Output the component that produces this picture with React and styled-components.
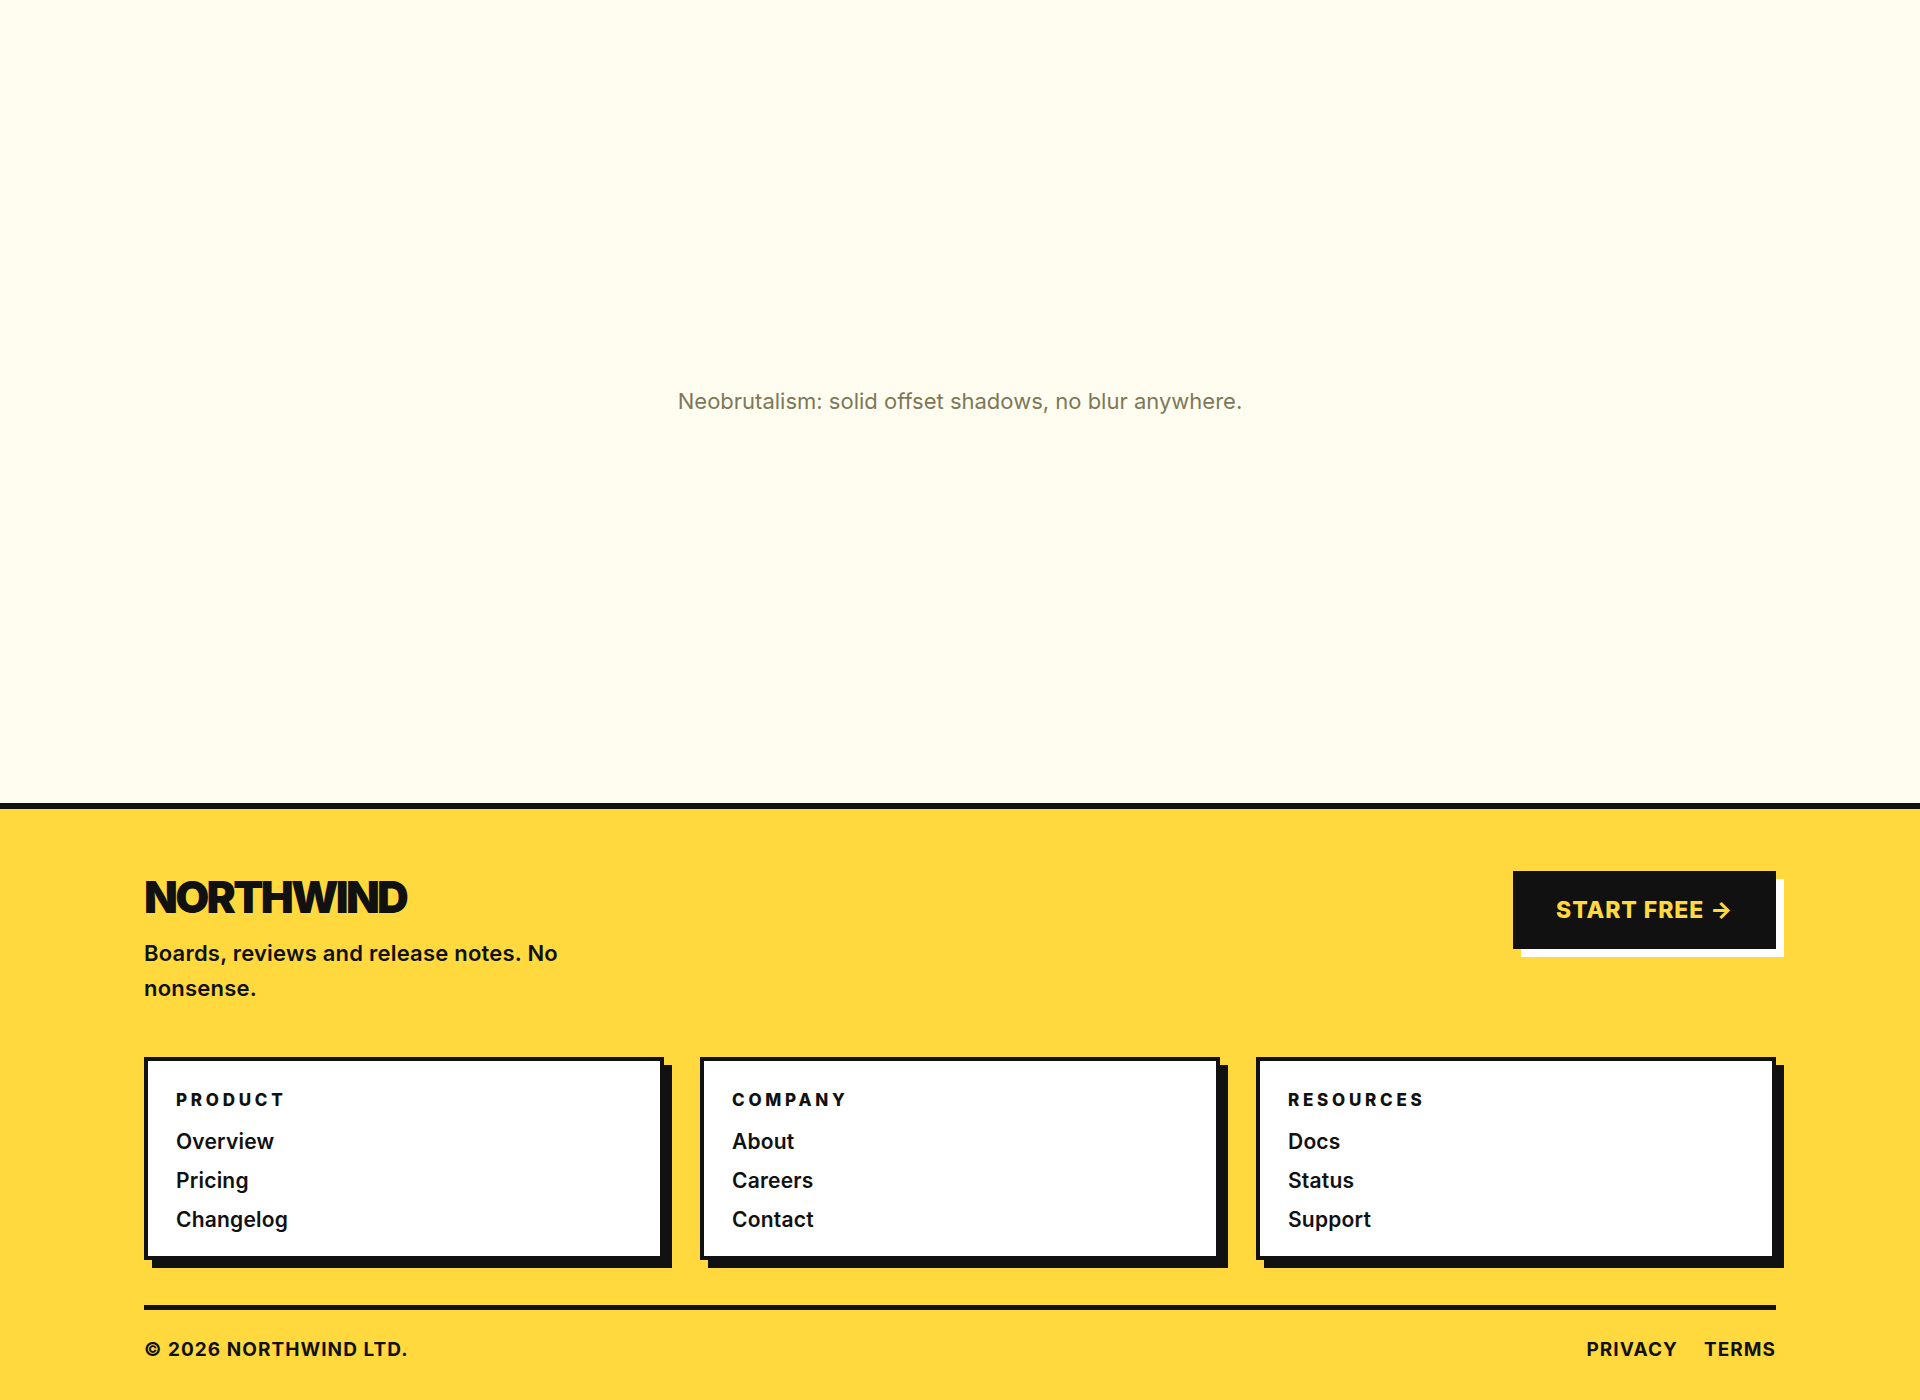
import React from "react";
import styled, { createGlobalStyle } from "styled-components";

const ink = "#111111";
const sun = "#FFD93D";
const cream = "#FFFDF0";

const GlobalStyle = createGlobalStyle`
  *, *::before, *::after { box-sizing: border-box; }
  html, body { margin: 0; padding: 0; }
  body {
    background: ${cream};
    color: ${ink};
    font-family: Inter, "Noto Sans", sans-serif;
  }
`;

const Page = styled.div`
  min-height: 100vh;
  display: flex;
  flex-direction: column;
`;

const Main = styled.main`
  flex: 1;
  display: flex;
  align-items: center;
  justify-content: center;
`;

const Note = styled.p`
  margin: 0;
  font-family: Inter, "Noto Sans", sans-serif;
  font-size: 22px;
  color: #7d7858;
`;

const Footer = styled.footer`
  background: ${sun};
  border-top: 6px solid ${ink};
  padding: 62px 144px 37px;
`;

const Top = styled.div`
  display: flex;
  justify-content: space-between;
  align-items: flex-start;
`;

const Brand = styled.div`
  display: flex;
  flex-direction: column;
`;

const Logo = styled.div`
  font-size: 44px;
  font-weight: 900;
  line-height: 1.2;
  letter-spacing: -0.062em;
`;

const Tagline = styled.p`
  margin: 12px 0 0;
  max-width: 460px;
  font-size: 22px;
  font-weight: 600;
  line-height: 35px;
  letter-spacing: 0.01em;
`;

const Cta = styled.a`
  display: inline-block;
  background: ${ink};
  color: ${sun};
  border: 3px solid ${ink};
  padding: 25px 40px;
  font-size: 23px;
  font-weight: 800;
  line-height: 22px;
  letter-spacing: 0.04em;
  text-decoration: none;
  box-shadow: 8px 8px 0 #ffffff;
`;

const Columns = styled.div`
  display: grid;
  grid-template-columns: repeat(3, 1fr);
  gap: 36px;
  margin-top: 51px;
`;

const Card = styled.section`
  background: #ffffff;
  border: 4px solid ${ink};
  box-shadow: 8px 8px 0 ${ink};
  padding: 29px 28px 21px;
`;

const Heading = styled.h4`
  margin: 0;
  font-size: 17px;
  font-weight: 800;
  line-height: 1.2;
  letter-spacing: 0.22em;
`;

const Links = styled.ul`
  list-style: none;
  margin: 17px 0 0;
  padding: 0;
  display: flex;
  flex-direction: column;
  gap: 9px;
`;

const LinkItem = styled.li`
  font-size: 21px;
  font-weight: 600;
  line-height: 30px;
  letter-spacing: 0.01em;
`;

const Bottom = styled.div`
  margin-top: 45px;
  border-top: 5px solid ${ink};
  padding-top: 26px;
  display: flex;
  justify-content: space-between;
  align-items: center;
`;

const Small = styled.span`
  font-size: 19px;
  font-weight: 700;
  line-height: 27px;
  letter-spacing: 0.055em;
`;

const Legal = styled.nav`
  display: flex;
  gap: 26px;
`;

const columns = [
  { title: "PRODUCT", links: ["Overview", "Pricing", "Changelog"] },
  { title: "COMPANY", links: ["About", "Careers", "Contact"] },
  { title: "RESOURCES", links: ["Docs", "Status", "Support"] },
];

export default function App() {
  return (
    <Page>
      <GlobalStyle />
      <Main>
        <Note>Neobrutalism: solid offset shadows, no blur anywhere.</Note>
      </Main>
      <Footer>
        <Top>
          <Brand>
            <Logo>NORTHWIND</Logo>
            <Tagline>Boards, reviews and release notes. No nonsense.</Tagline>
          </Brand>
          <Cta href="#">START FREE →</Cta>
        </Top>
        <Columns>
          {columns.map((col) => (
            <Card key={col.title}>
              <Heading>{col.title}</Heading>
              <Links>
                {col.links.map((l) => (
                  <LinkItem key={l}>{l}</LinkItem>
                ))}
              </Links>
            </Card>
          ))}
        </Columns>
        <Bottom>
          <Small>© 2026 NORTHWIND LTD.</Small>
          <Legal>
            <Small>PRIVACY</Small>
            <Small>TERMS</Small>
          </Legal>
        </Bottom>
      </Footer>
    </Page>
  );
}
